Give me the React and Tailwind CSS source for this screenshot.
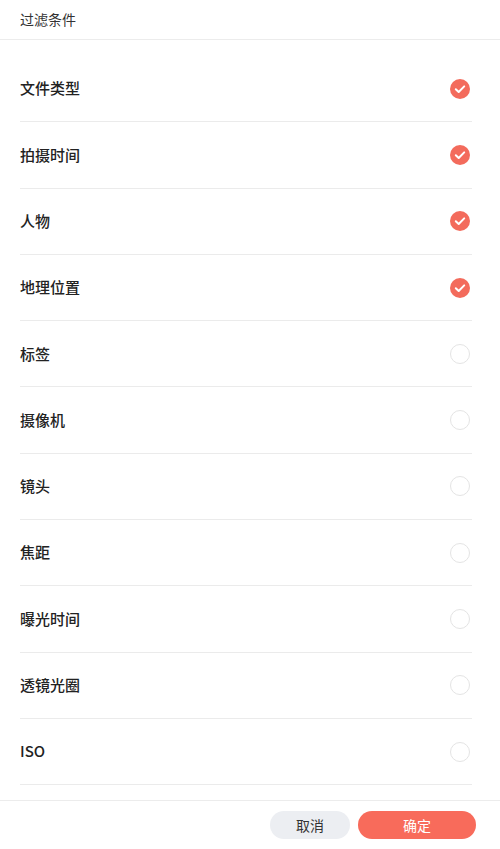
import { useState } from 'react';

const items = [
  { label: '文件类型', on: true },
  { label: '拍摄时间', on: true },
  { label: '人物', on: true },
  { label: '地理位置', on: true },
  { label: '标签', on: false },
  { label: '摄像机', on: false },
  { label: '镜头', on: false },
  { label: '焦距', on: false },
  { label: '曝光时间', on: false },
  { label: '透镜光圈', on: false },
  { label: 'ISO', on: false },
];

const CheckMark = ({ on }) =>
  on ? (
    <span className="flex size-5 items-center justify-center rounded-full bg-[#f36b5c]">
      <svg viewBox="0 0 20 20" className="size-5" fill="none">
        <path d="M5.8 10.2 8.7 13l5.5-5.6" stroke="white" strokeWidth="2" strokeLinecap="round" strokeLinejoin="round" />
      </svg>
    </span>
  ) : (
    <span className="size-5 rounded-full border-[1.5px] border-[#e4e4e4]" />
  );

const App = () => {
  const [list, setList] = useState(items);

  const toggle = (i) =>
    setList((l) => l.map((it, idx) => (idx === i ? { ...it, on: !it.on } : it)));

  return (
    <div className="flex h-[849px] w-[500px] flex-col bg-white text-[#222] font-['Noto_Sans_CJK_SC','Noto_Sans',sans-serif]">
      <div className="flex h-10 shrink-0 items-center border-b border-[#ececec] px-5 text-[14px] text-[#333]">
        过滤条件
      </div>
      <div className="flex-1 overflow-hidden pt-4">
        {list.map((it, i) => (
          <button
            key={it.label}
            onClick={() => toggle(i)}
            className="mx-5 flex h-[66.3px] w-[452px] items-center justify-between border-b border-[#ebebeb] pr-[2px] text-left"
          >
            <span className="text-[15px] font-medium">{it.label}</span>
            <CheckMark on={it.on} />
          </button>
        ))}
      </div>
      <div className="flex h-[49px] shrink-0 items-center justify-end gap-2 border-t border-[#ececec] pr-6">
        <button className="h-7 w-20 rounded-full bg-[#eceef2] text-[14px] text-[#333]">取消</button>
        <button className="h-7 w-[118px] rounded-full bg-[#f86b5b] text-[14px] text-white">确定</button>
      </div>
    </div>
  );
};

export default App;
